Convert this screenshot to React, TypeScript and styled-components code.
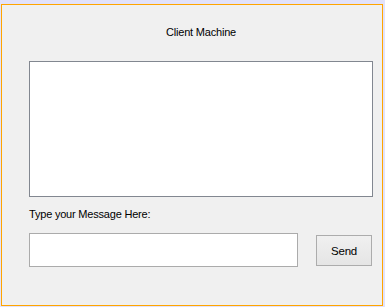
import React from 'react';
import styled, { createGlobalStyle } from 'styled-components';

const GlobalStyle = createGlobalStyle`
  html, body {
    margin: 0;
    padding: 0;
    background: #e2e2fa;
  }
  body {
    font-family: 'Liberation Sans', Arial, sans-serif;
    font-size: 11px;
    letter-spacing: -0.2px;
    color: #000;
  }
`;

const Window = styled.div`
  box-sizing: border-box;
  width: 382px;
  height: 302px;
  margin: 4px 0 0 1px;
  border: 1px solid #ffa500;
  background: #f0f0f0;
  padding: 19px 9px 0 27px;
  display: flex;
  flex-direction: column;
`;

const Title = styled.div`
  height: 16px;
  line-height: 16px;
  text-align: center;
`;

const Conversation = styled.div`
  box-sizing: border-box;
  margin-top: 21px;
  height: 136px;
  background: #fff;
  border: 1px solid #828790;
`;

const Label = styled.div`
  margin-top: 9px;
  height: 16px;
  line-height: 16px;
`;

const InputRow = styled.div`
  margin-top: 11px;
  display: flex;
  align-items: center;
  gap: 18px;
`;

const MessageInput = styled.input`
  box-sizing: border-box;
  width: 269px;
  height: 34px;
  margin: 0;
  border: 1px solid #ababab;
  background: #fff;
  outline: none;
  font: inherit;
`;

const SendButton = styled.button`
  box-sizing: border-box;
  width: 56px;
  height: 31px;
  margin: 1px 0 0;
  padding: 0;
  border: 1px solid #acacac;
  background: linear-gradient(#f0f0f0, #e5e5e5);
  font-family: inherit;
  font-size: 11.5px;
  letter-spacing: inherit;
  color: #000;
`;

export default function App() {
  return (
    <>
      <GlobalStyle />
      <Window>
        <Title>Client Machine</Title>
        <Conversation />
        <Label>Type your Message Here:</Label>
        <InputRow>
          <MessageInput type="text" />
          <SendButton>Send</SendButton>
        </InputRow>
      </Window>
    </>
  );
}
